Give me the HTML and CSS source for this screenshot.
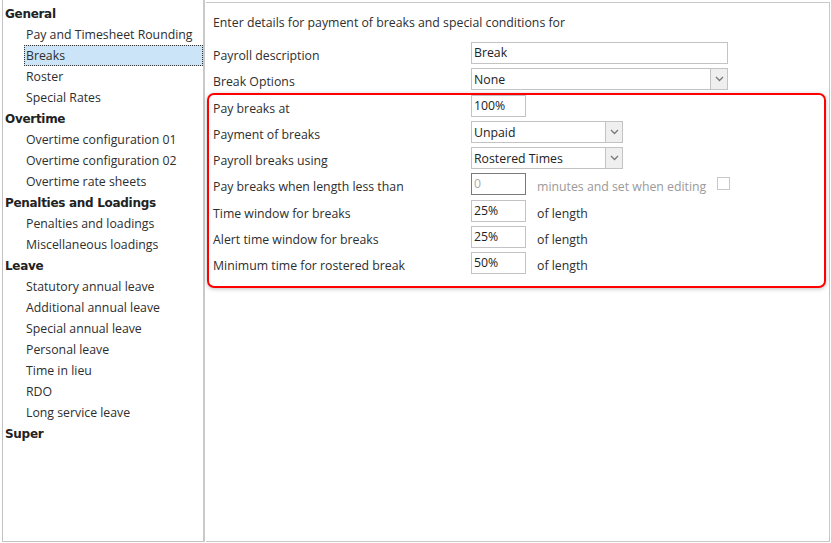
FILE: index.html
```html
<!DOCTYPE html>
<html>
<head>
<meta charset="utf-8">
<link rel="stylesheet" href="styles.css">
</head>
<body>
<div class="app">
  <nav class="tree">
    <div class="grp">General</div>
    <div class="item">Pay and Timesheet Rounding</div>
    <div class="item sel">Breaks</div>
    <div class="item">Roster</div>
    <div class="item">Special Rates</div>
    <div class="grp">Overtime</div>
    <div class="item">Overtime configuration 01</div>
    <div class="item">Overtime configuration 02</div>
    <div class="item">Overtime rate sheets</div>
    <div class="grp">Penalties and Loadings</div>
    <div class="item">Penalties and loadings</div>
    <div class="item">Miscellaneous loadings</div>
    <div class="grp">Leave</div>
    <div class="item">Statutory annual leave</div>
    <div class="item">Additional annual leave</div>
    <div class="item">Special annual leave</div>
    <div class="item">Personal leave</div>
    <div class="item">Time in lieu</div>
    <div class="item">RDO</div>
    <div class="item">Long service leave</div>
    <div class="grp">Super</div>
  </nav>
  <main class="content">
    <p class="intro">Enter details for payment of breaks and special conditions for</p>
    <div class="row">
      <span class="lbl">Payroll description</span>
      <div class="box wide">Break</div>
    </div>
    <div class="row">
      <span class="lbl">Break Options</span>
      <div class="box wide sel-box"><span class="val">None</span><span class="arrow"><svg width="9" height="6" viewBox="0 0 9 6"><path d="M1 1 L4.5 4.5 L8 1" fill="none" stroke="#777" stroke-width="1.3"/></svg></span></div>
    </div>
    <div class="group">
      <div class="row">
        <span class="lbl">Pay breaks at</span>
        <div class="box small">100%</div>
      </div>
      <div class="row">
        <span class="lbl">Payment of breaks</span>
        <div class="box mid sel-box"><span class="val">Unpaid</span><span class="arrow"><svg width="9" height="6" viewBox="0 0 9 6"><path d="M1 1 L4.5 4.5 L8 1" fill="none" stroke="#777" stroke-width="1.3"/></svg></span></div>
      </div>
      <div class="row">
        <span class="lbl">Payroll breaks using</span>
        <div class="box mid sel-box"><span class="val">Rostered Times</span><span class="arrow"><svg width="9" height="6" viewBox="0 0 9 6"><path d="M1 1 L4.5 4.5 L8 1" fill="none" stroke="#777" stroke-width="1.3"/></svg></span></div>
      </div>
      <div class="row">
        <span class="lbl">Pay breaks when length less than</span>
        <div class="box small disabled">0</div>
        <span class="suffix muted">minutes and set when editing</span>
        <span class="check"></span>
      </div>
      <div class="row gap-top">
        <span class="lbl">Time window for breaks</span>
        <div class="box small">25%</div>
        <span class="suffix">of length</span>
      </div>
      <div class="row">
        <span class="lbl">Alert time window for breaks</span>
        <div class="box small">25%</div>
        <span class="suffix">of length</span>
      </div>
      <div class="row">
        <span class="lbl">Minimum time for rostered break</span>
        <div class="box small">50%</div>
        <span class="suffix">of length</span>
      </div>
    </div>
  </main>
</div>
</body>
</html>
```
FILE: styles.css
```css
* { box-sizing: border-box; }
html, body { margin: 0; padding: 0; background: #fff; }
body {
  font-family: "Open Sans", "Noto Sans", sans-serif;
  font-size: 12.3px;
  color: #2e2e2e;
  width: 831px;
  height: 543px;
  overflow: hidden;
}
.app {
  display: flex;
  height: 543px;
  padding: 0 1px 1px 2px;
}
.tree {
  width: 203px;
  flex: none;
  border-left: 1px solid #c3c3c3;
  border-right: 2px solid #c9c9c9;
  border-bottom: 1px solid #c3c3c3;
  padding-top: 3px;
}
.grp {
  height: 21px;
  line-height: 21px;
  padding-left: 2px;
  padding-top: 1px;
  font-family: "DejaVu Sans", sans-serif;
  font-weight: bold;
  font-size: 12px;
  letter-spacing: -0.3px;
  color: #222;
}
.item {
  height: 21px;
  line-height: 21px;
  padding-left: 23px;
  white-space: nowrap;
}
.item.sel {
  margin-left: 21px;
  padding-left: 2px;
  background: #cce4f7;
  outline: 1px dotted #333;
  outline-offset: -1px;
}
.content {
  flex: 1;
  margin-left: 1px;
  margin-top: 2px;
  border-top: 1px solid #c8c8c8;
  border-right: 1px solid #c8c8c8;
  border-bottom: 1px solid #c8c8c8;
  padding: 10px 3px 0 1px;
}
.intro {
  margin: 0 0 9px 6px;
  height: 20px;
  line-height: 20px;
}
.row {
  display: flex;
  align-items: center;
  height: 22px;
  margin-bottom: 4px;
  padding-left: 6px;
}
.lbl {
  width: 258px;
  flex: none;
  padding-top: 4px;
}
.box {
  height: 22px;
  border: 1px solid #c3c3c3;
  padding: 0 2px;
  line-height: 19px;
  color: #222;
  display: flex;
  align-items: flex-start;
}
.wide { width: 257px; }
.mid { width: 152px; }
.small { width: 55px; }
.box.disabled {
  border-color: #7a7a7a;
  color: #aaa;
}
.sel-box { padding-right: 0; justify-content: space-between; }
.sel-box .val { padding-top: 1px; line-height: 20px; }
.arrow {
  width: 17px;
  height: 20px;
  border-left: 1px solid #c3c3c3;
  background: #efefef;
  display: flex;
  align-items: center;
  justify-content: center;
}
.suffix {
  margin-left: 11px;
  padding-top: 4px;
}
.muted { color: #9a9a9a; }
.check {
  margin-left: 11px;
  width: 13px;
  height: 13px;
  border: 1px solid #c8c8c8;
  margin-top: -2px;
}
.group {
  width: 619px;
  border: 2px solid #f00;
  border-radius: 7px;
  box-shadow: 0 1px 4px rgba(0,0,0,0.25);
  padding: 1px 0 8px 0;
  margin-top: -1px;
}
.group .row { padding-left: 4px; }
.group .row.gap-top { margin-top: 5px; }
.group .row:first-child { margin-top: -1px; }
```
